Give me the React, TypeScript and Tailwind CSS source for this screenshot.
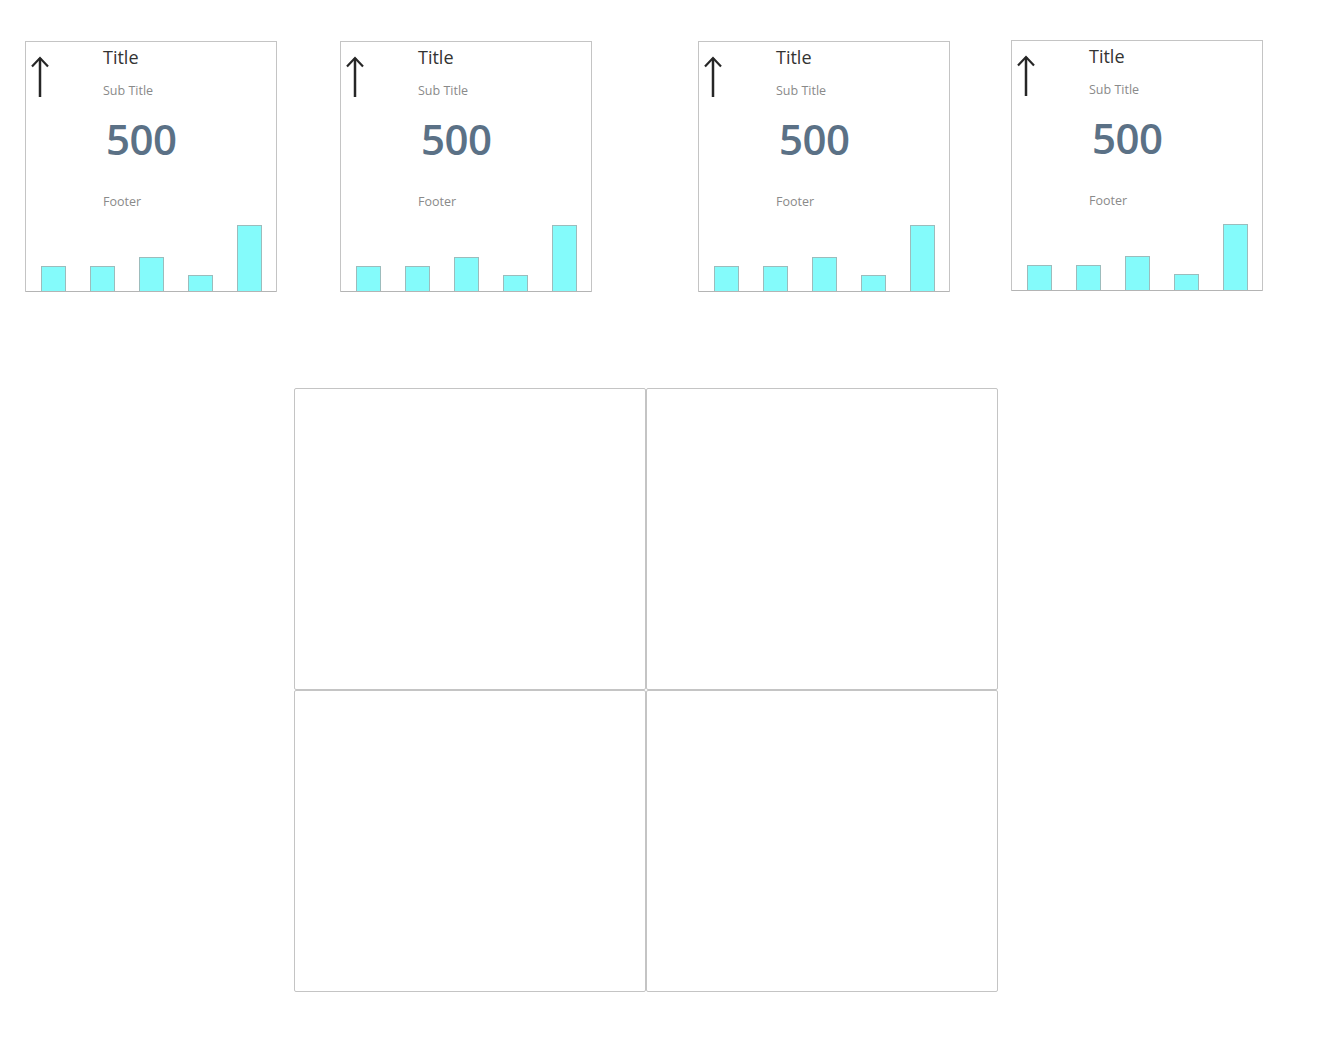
import React from "react";

const bars = [25, 25, 34, 16, 66];

function Card({ extra }: { extra: string }) {
  return (
    <div className={`w-[252px] h-[251px] shrink-0 border-t border-l border-r border-[#c4c4c4] flex flex-col ${extra}`}>
      <div className="flex flex-1">
        <div className="w-[77px] shrink-0 pl-[5px] pt-[14px]">
          <svg width="18" height="42" viewBox="0 0 18 42" fill="none">
            <path d="M9 2 L9 41" stroke="#262626" strokeWidth="2.5" />
            <path d="M1 10.5 L9 2 L17 10.5" stroke="#262626" strokeWidth="2.2" strokeLinejoin="miter" />
          </svg>
        </div>
        <div className="flex flex-col">
          <div className="mt-[3px] h-[24px] leading-[24px] text-[18px] text-[#333333]">Title</div>
          <div className="mt-[13px] h-[18px] leading-[18px] text-[12.5px] text-[#8a8a8a]">Sub Title</div>
          <div className="mt-[15px] ml-[3px] h-[48px] leading-[48px] text-[42px] font-semibold tracking-[-0.5px] text-[#5b7186]">500</div>
          <div className="mt-[30px] h-[18px] leading-[18px] text-[12.5px] text-[#8a8a8a]">Footer</div>
        </div>
      </div>
      <div className="h-[67px] flex items-end gap-[24px] pl-[15px] border-b border-[#b4b4b4]">
        {bars.map((h, i) => (
          <div
            key={i}
            className="w-[25px] bg-[#84fbfb] border border-b-0 border-[#9cbcbc]"
            style={{ height: h }}
          />
        ))}
      </div>
    </div>
  );
}

export default function App() {
  return (
    <div className="w-[1322px] h-[1059px] bg-white" style={{ fontFamily: '"Open Sans", "Noto Sans", sans-serif' }}>
      <div className="flex items-start pt-[41px] pl-[25px]">
        <Card extra="" />
        <Card extra="ml-[63px]" />
        <Card extra="ml-[106px]" />
        <Card extra="ml-[61px] -mt-[1px]" />
      </div>
      <div className="ml-[294px] mt-[96px] grid grid-cols-[352px_352px] grid-rows-[302px_302px] w-[704px]">
        <div className="border border-[#c4c4c4] rounded-[2px]" />
        <div className="border border-[#c4c4c4] rounded-[2px]" />
        <div className="border border-[#c4c4c4] rounded-[2px]" />
        <div className="border border-[#c4c4c4] rounded-[2px]" />
      </div>
    </div>
  );
}
